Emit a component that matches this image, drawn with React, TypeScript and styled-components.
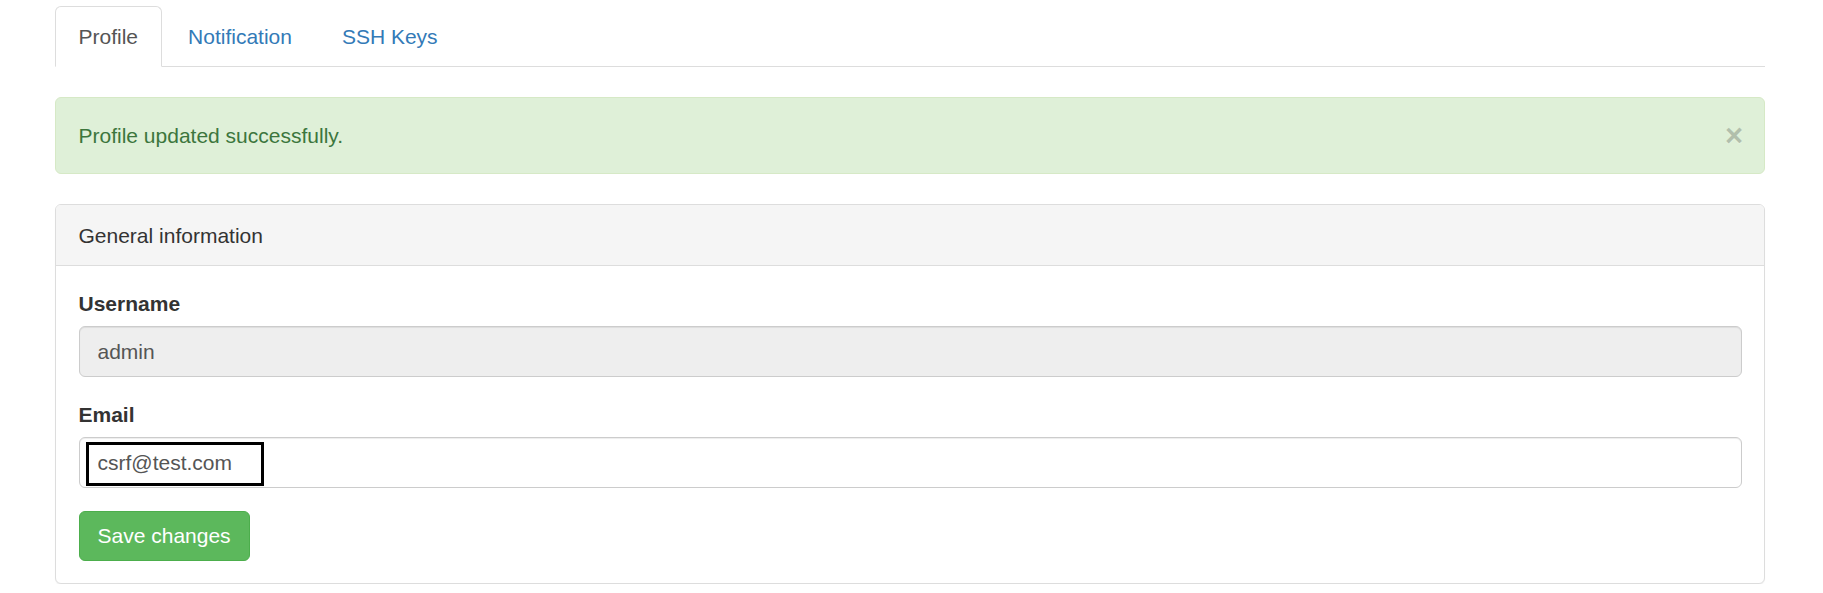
import styled, { createGlobalStyle } from "styled-components";

const GlobalStyle = createGlobalStyle`
  html, body {
    margin: 0;
    padding: 0;
    background: #fff;
  }
  body {
    font-family: "Liberation Sans", Arial, sans-serif;
    font-size: 21px;
    line-height: 30px;
    color: #333;
  }
  * {
    box-sizing: border-box;
  }
`;

const tabs = ["Profile", "Notification", "SSH Keys"];

const Page = styled.div`
  padding: 6px 58px 0 55px;
`;

const TabBar = styled.ul`
  display: flex;
  margin: 0;
  padding: 0;
  list-style: none;
  border-bottom: 1px solid #ddd;
`;

const TabItem = styled.li`
  margin-bottom: -1px;
`;

const TabLink = styled.a<{ $active?: boolean }>`
  display: block;
  margin-right: 3px;
  padding: 15px 22.5px 14px;
  line-height: 30px;
  border: 1px solid ${({ $active }) => ($active ? "#ddd" : "transparent")};
  border-bottom-color: transparent;
  border-radius: 6px 6px 0 0;
  background: ${({ $active }) => ($active ? "#fff" : "transparent")};
  color: ${({ $active }) => ($active ? "#555" : "#337ab7")};
  text-decoration: none;
  cursor: pointer;
`;

const Alert = styled.div`
  position: relative;
  margin: 30px 0;
  padding: 22.5px 52.5px 22.5px 22.5px;
  background: #dff0d8;
  border: 1px solid #d6e9c6;
  border-radius: 6px;
  color: #3c763d;
`;

const CloseButton = styled.button`
  position: absolute;
  top: 22px;
  right: 21px;
  padding: 0;
  border: 0;
  background: transparent;
  font-family: "Liberation Sans", Arial, sans-serif;
  font-size: 31px;
  font-weight: bold;
  line-height: 1;
  color: #000;
  opacity: 0.2;
  text-shadow: 0 1px 0 #fff;
  cursor: pointer;
`;

const Panel = styled.div`
  border: 1px solid #ddd;
  border-radius: 6px;
  background: #fff;
  box-shadow: 0 1px 1px rgba(0, 0, 0, 0.05);
`;

const PanelHeading = styled.div`
  padding: 16px 22.5px 14px;
  background: #f5f5f5;
  border-bottom: 1px solid #ddd;
  border-radius: 5px 5px 0 0;
`;

const PanelBody = styled.div`
  padding: 22.5px;
`;

const FormGroup = styled.div`
  margin-bottom: 22.5px;
`;

const Label = styled.label`
  display: block;
  margin-bottom: 7.5px;
  font-weight: bold;
`;

const InputWrap = styled.div`
  position: relative;
`;

const Input = styled.input`
  display: block;
  width: 100%;
  height: 51px;
  padding: 9px 18px;
  font-family: "Liberation Sans", Arial, sans-serif;
  font-size: 21px;
  line-height: 30px;
  color: #555;
  background: ${({ disabled }) => (disabled ? "#eee" : "#fff")};
  border: 1px solid #ccc;
  border-radius: 6px;
  box-shadow: inset 0 1px 1px rgba(0, 0, 0, 0.075);
  outline: none;
`;

const Highlight = styled.span`
  position: absolute;
  left: 7px;
  top: 5px;
  width: 178px;
  height: 44px;
  border: 3px solid #000;
  pointer-events: none;
`;

const SaveButton = styled.button`
  display: inline-block;
  padding: 9px 18px;
  font-family: "Liberation Sans", Arial, sans-serif;
  font-size: 21px;
  line-height: 30px;
  color: #fff;
  background: #5cb85c;
  border: 1px solid #4cae4c;
  border-radius: 6px;
  cursor: pointer;
`;

export default function App() {
  return (
    <>
      <GlobalStyle />
      <Page>
        <TabBar>
          {tabs.map((t, i) => (
            <TabItem key={t}>
              <TabLink $active={i === 0}>{t}</TabLink>
            </TabItem>
          ))}
        </TabBar>

        <Alert>
          <CloseButton aria-label="Close">×</CloseButton>
          Profile updated successfully.
        </Alert>

        <Panel>
          <PanelHeading>General information</PanelHeading>
          <PanelBody>
            <FormGroup>
              <Label>Username</Label>
              <Input value="admin" disabled readOnly />
            </FormGroup>
            <FormGroup>
              <Label>Email</Label>
              <InputWrap>
                <Input defaultValue="csrf@test.com" />
                <Highlight />
              </InputWrap>
            </FormGroup>
            <SaveButton>Save changes</SaveButton>
          </PanelBody>
        </Panel>
      </Page>
    </>
  );
}
